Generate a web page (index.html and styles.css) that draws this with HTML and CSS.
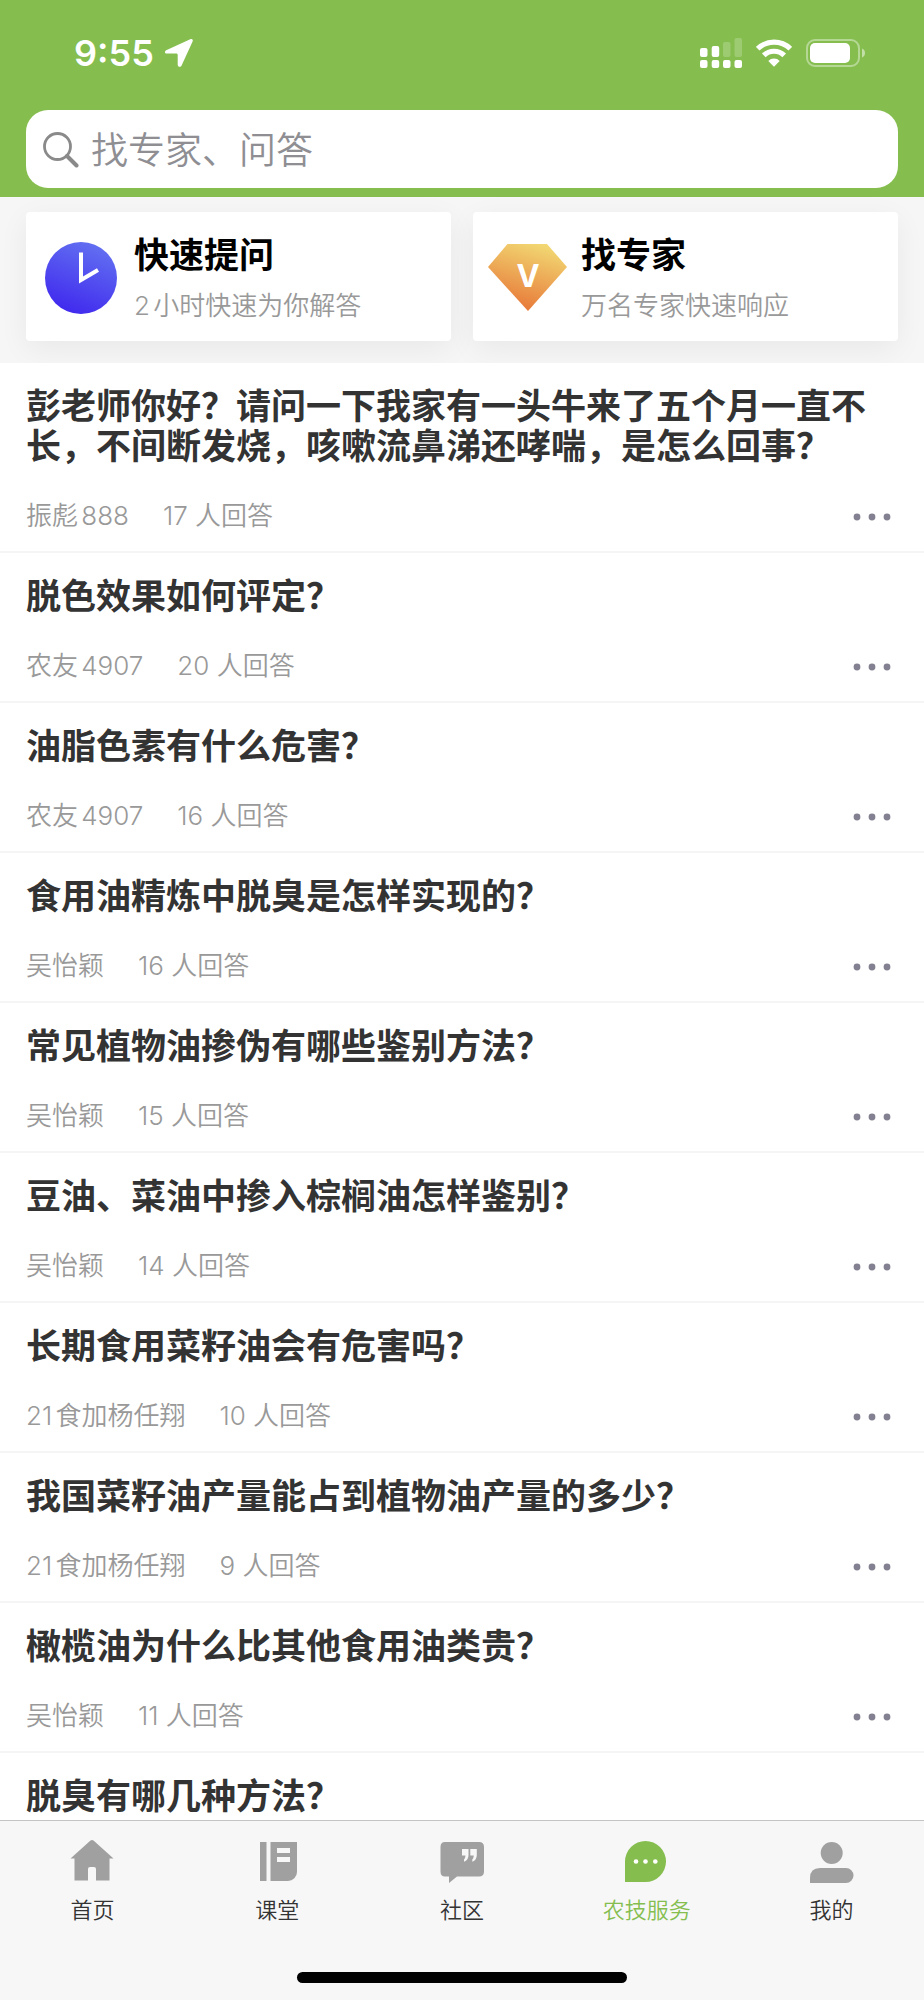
FILE: index.html
```html
<!DOCTYPE html>
<html lang="zh-CN">
<head>
<meta charset="utf-8">
<meta name="viewport" content="width=device-width, initial-scale=1">
<title>农技服务</title>
<link rel="stylesheet" href="styles.css">
</head>
<body>
<div class="app">
  <header class="header">
    <div class="status">
      <div class="status-left">
        <span class="time">9:55</span>
        <svg class="icon-location" viewBox="0 0 30 30" width="30" height="30" aria-hidden="true"><path d="M26.200 1.200 2.200 12.200C.4 13.200.7 15.600 2.500 15.600H12.200C13.200 15.600 13.700 16.100 13.700 17.100V26.400C13.700 29.200 16.700 29.500 17.700 27.200L28.600 3.600C29.300 1.600 28.200.5 26.200 1.200Z" fill="#fff"/></svg>
      </div>
      <div class="status-right">
        <svg viewBox="0 0 42 30" width="42" height="30" aria-hidden="true">
          <g fill="#fff"><rect x="0" y="10" width="7.500" height="9" rx="2"/><rect x="11.700" y="8" width="7.500" height="11" rx="2"/><rect x="0" y="22" width="7.500" height="8" rx="2"/><rect x="11.700" y="22" width="7.500" height="8" rx="2"/><rect x="23" y="22" width="7.500" height="8" rx="2"/><rect x="34.500" y="22" width="7.500" height="8" rx="2"/></g>
          <g fill="#fff" opacity=".2"><rect x="23" y="4" width="7.500" height="15" rx="2"/><rect x="34.500" y="0" width="7.500" height="19" rx="2"/></g>
        </svg>
        <svg viewBox="0 0 36 30" width="36" height="30" aria-hidden="true"><g fill="none" stroke="#fff" stroke-width="5.200"><path d="M1.700 10.700A23.500 23.500 0 0 1 34.300 10.700"/><path d="M7.800 17.400A14.600 14.600 0 0 1 28.200 17.400"/></g><path d="M18 28.800 12.300 23A8 8 0 0 1 23.700 23Z" fill="#fff"/></svg>
        <svg viewBox="0 0 60 30" width="60" height="30" aria-hidden="true"><rect x="1" y="2" width="52" height="26" rx="8" fill="none" stroke="#fff" stroke-opacity=".4" stroke-width="2"/><rect x="4" y="5" width="40" height="20" rx="5" fill="#fff"/><path d="M56 10.500C60 12 60 18 56 19.500Z" fill="#fff" opacity=".5"/></svg>
      </div>
    </div>
    <form class="search" role="search">
      <label class="search-label" for="q" aria-label="搜索"><svg viewBox="0 0 36 36" width="36" height="36" aria-hidden="true"><circle cx="14.500" cy="14.500" r="13" fill="none" stroke="#8a8a8a" stroke-width="2.800"/><path d="M24 24 33.500 33.500" stroke="#8a8a8a" stroke-width="4" stroke-linecap="round"/></svg></label>
      <input class="search-input" id="q" type="text" placeholder="找专家、问答">
    </form>
  </header>

  <nav class="cards" aria-label="快捷入口">
    <a class="card" href="#ask">
      <svg class="card-icon" viewBox="0 0 80 72" width="80" height="72" aria-hidden="true"><defs><linearGradient id="clock" x1=".75" y1="0" x2=".35" y2="1"><stop offset="0" stop-color="#6372f1"/><stop offset="1" stop-color="#4029ee"/></linearGradient></defs><circle cx="41" cy="36" r="36" fill="url(#clock)"/><path d="M41 10.500V38L58 28" fill="none" stroke="#fff" stroke-width="4"/></svg>
      <span class="card-text"><strong class="card-title">快速提问</strong><span class="card-sub">2小时快速为你解答</span></span>
    </a>
    <a class="card" href="#expert">
      <svg class="card-icon" viewBox="0 0 80 72" width="80" height="72" aria-hidden="true"><defs><linearGradient id="gem" x1=".75" y1="0" x2=".4" y2="1"><stop offset="0" stop-color="#f2da74"/><stop offset="1" stop-color="#e77637"/></linearGradient></defs><path d="M20.500 2H60L80 25 41 69 1 25Z" fill="url(#gem)"/><text class="gem-letter" x="41" y="45" text-anchor="middle">V</text></svg>
      <span class="card-text"><strong class="card-title">找专家</strong><span class="card-sub">万名专家快速响应</span></span>
    </a>
  </nav>

  <main class="list" id="list"></main>

  <nav class="tabbar" aria-label="主导航">
    <div class="tabs">
      <a class="tab" href="#home"><svg viewBox="0 0 44 46" width="44" height="46" aria-hidden="true"><path d="M20.500 2.600Q22 1.400 23.500 2.600L43.500 20.500H39.500V42.500H26V31Q26 29 24 29H20Q18 29 18 31V42.500H4.500V20.500H.5Z" fill="#a0a0a0"/></svg><span>首页</span></a>
      <a class="tab" href="#class"><svg viewBox="0 0 44 46" width="44" height="46" aria-hidden="true"><path d="M5 4H11.500V43H5ZM15.500 4H42V34A9 9 0 0 1 33 43H15.500ZM22 10V15H35V10ZM22 19V24H35V19Z" fill="#a0a0a0" fill-rule="evenodd"/></svg><span>课堂</span></a>
      <a class="tab" href="#community"><svg viewBox="0 0 44 46" width="44" height="46" aria-hidden="true"><path d="M5 4H39Q44 4 44 9V33.500Q44 38.500 39 38.500H17L9 45V38.500H5Q.5 38.500 .5 33.500V9Q.5 4 5 4Z" fill="#a0a0a0"/><path d="M22 11H28.500V17Q28.500 22 24 23.700V21.500Q25.500 19.500 25.500 17.500H22ZM30.300 11H36.800V17Q36.800 22 32.300 23.700V21.500Q33.800 19.500 33.800 17.500H30.300Z" fill="#f7f7f7"/></svg><span>社区</span></a>
      <a class="tab tab-active" href="#service" aria-current="page"><svg viewBox="0 0 44 46" width="44" height="46" aria-hidden="true"><path d="M0 44V23.500A20.500 20.500 0 1 1 20.500 44Z" fill="#85be4f"/><g fill="#fff"><circle cx="11" cy="23.500" r="2.300"/><circle cx="20.500" cy="23.500" r="2.300"/><circle cx="30.300" cy="23.500" r="2.300"/></g></svg><span>农技服务</span></a>
      <a class="tab" href="#me"><svg viewBox="0 0 44 46" width="44" height="46" aria-hidden="true"><circle cx="21.700" cy="15" r="11" fill="#a0a0a0"/><path d="M0 45V40Q0 30 10 30H36A7.500 7.500 0 0 1 36 45Z" fill="#a0a0a0"/></svg><span>我的</span></a>
    </div>
    <div class="home-indicator"></div>
  </nav>
</div>
<script src="app.js"></script>
</body>
</html>
```
FILE: styles.css
```css
* {
  box-sizing: border-box;
}

body {
  margin: 0;
  background: #fff;
  color: #333;
  font-family: Inter, "Noto Sans CJK SC", sans-serif;
  text-autospace: normal;
}

a {
  color: inherit;
  text-decoration: none;
}

svg {
  display: block;
  flex: none;
}

.app {
  display: flex;
  flex-direction: column;
  height: 100vh;
}

.header {
  flex: none;
  padding: 0 26px 9px;
  background: #85be4f;
}

.status {
  display: flex;
  justify-content: space-between;
  height: 110px;
  padding: 32px 32px 0 48px;
  color: #fff;
}

.status-left,
.status-right {
  display: flex;
  align-items: center;
  height: 42px;
}

.status-left {
  gap: 10px;
}

.status-right {
  gap: 14px;
}

.time {
  font-size: 36px;
  font-weight: 600;
  line-height: 42px;
}

.search {
  display: flex;
  align-items: center;
  gap: 12px;
  height: 78px;
  padding: 2px 17px 0;
  border-radius: 22px;
  background: #fff;
}

.search-input {
  flex: 1;
  min-width: 0;
  padding: 2px 0 0;
  border: 0;
  outline: 0;
  background: none;
  color: #333;
  font: 350 37px/54px Inter, "Noto Sans CJK SC", sans-serif;
}

.search-input::placeholder {
  color: #8e8e93;
  opacity: 1;
}

.cards {
  display: flex;
  flex: none;
  gap: 22px;
  padding: 15px 26px 22px;
  background: #f6f6f6;
  overflow: hidden;
}

.card {
  display: flex;
  flex: 1;
  align-items: center;
  gap: 14px;
  height: 129px;
  padding: 2px 14px 0;
  border-radius: 4px;
  background: #fff;
  box-shadow: 0 8px 30px rgba(0, 0, 0, 0.06);
}

.gem-letter {
  fill: #fff;
  font-size: 31px;
  font-weight: 700;
}

.card-text {
  display: flex;
  flex-direction: column;
  gap: 8px;
}

.card-title {
  color: #000;
  font-size: 35px;
  font-weight: 600;
  line-height: 48px;
}

.card-sub {
  color: #999;
  font-size: 26px;
  font-weight: 350;
  line-height: 38px;
}

.list {
  flex: 1;
  min-height: 0;
  overflow-y: auto;
  scrollbar-width: none;
}

.question {
  padding: 23px 26px 14px;
  border-bottom: 2px solid #f5f5f5;
}

.question:last-child {
  padding-bottom: 0;
  border-bottom: 0;
}

.question-title {
  margin: 0 0 29px;
  font-size: 35px;
  font-weight: 600;
  line-height: 40px;
}

.question:last-child .question-title {
  margin-bottom: 0;
}

.question-meta {
  display: flex;
  align-items: center;
  gap: 34px;
  height: 42px;
  color: #999;
  font-size: 26px;
  font-weight: 350;
  line-height: 38px;
}

.more {
  margin-left: auto;
  padding: 14px 7px 12px;
  border: 0;
  background: none;
}

.tabbar {
  flex: none;
  height: 180px;
  padding-top: 17px;
  border-top: 1px solid #c4c4c4;
  background: #f7f7f7;
}

.tabs {
  display: flex;
}

.tab {
  display: flex;
  flex: 1;
  flex-direction: column;
  align-items: center;
  gap: 10px;
  font-size: 22px;
  font-weight: 350;
  line-height: 32px;
}

.tab-active {
  color: #85be4f;
}

.home-indicator {
  width: 330px;
  height: 11px;
  margin: 46px auto 0;
  border-radius: 6px;
  background: #000;
}
```
FILE: app.js
```js
const questions = [
  ["彭老师你好？请问一下我家有一头牛来了五个月一直不长，不间断发烧，咳嗽流鼻涕还哮喘，是怎么回事？", "振彪888", 17],
  ["脱色效果如何评定？", "农友4907", 20],
  ["油脂色素有什么危害？", "农友4907", 16],
  ["食用油精炼中脱臭是怎样实现的？", "吴怡颖", 16],
  ["常见植物油掺伪有哪些鉴别方法？", "吴怡颖", 15],
  ["豆油、菜油中掺入棕榈油怎样鉴别？", "吴怡颖", 14],
  ["长期食用菜籽油会有危害吗？", "21食加杨任翔", 10],
  ["我国菜籽油产量能占到植物油产量的多少？", "21食加杨任翔", 9],
  ["橄榄油为什么比其他食用油类贵？", "吴怡颖", 11],
  ["脱臭有哪几种方法？"],
];

const meta = (author, count) => `
    <div class="question-meta">
      <span>${author}</span>
      <span>${count} 人回答</span>
      <button class="more" type="button" aria-label="更多">
        <svg viewBox="0 0 38 8" width="38" height="8"><g fill="#838091"><circle cx="4" cy="4" r="3.400"/><circle cx="19" cy="4" r="3.400"/><circle cx="34" cy="4" r="3.400"/></g></svg>
      </button>
    </div>`;

document.getElementById("list").innerHTML = questions.map(([title, author, count]) => `
  <article class="question">
    <h2 class="question-title">${title}</h2>${author ? meta(author, count) : ""}
  </article>`).join("");
```
